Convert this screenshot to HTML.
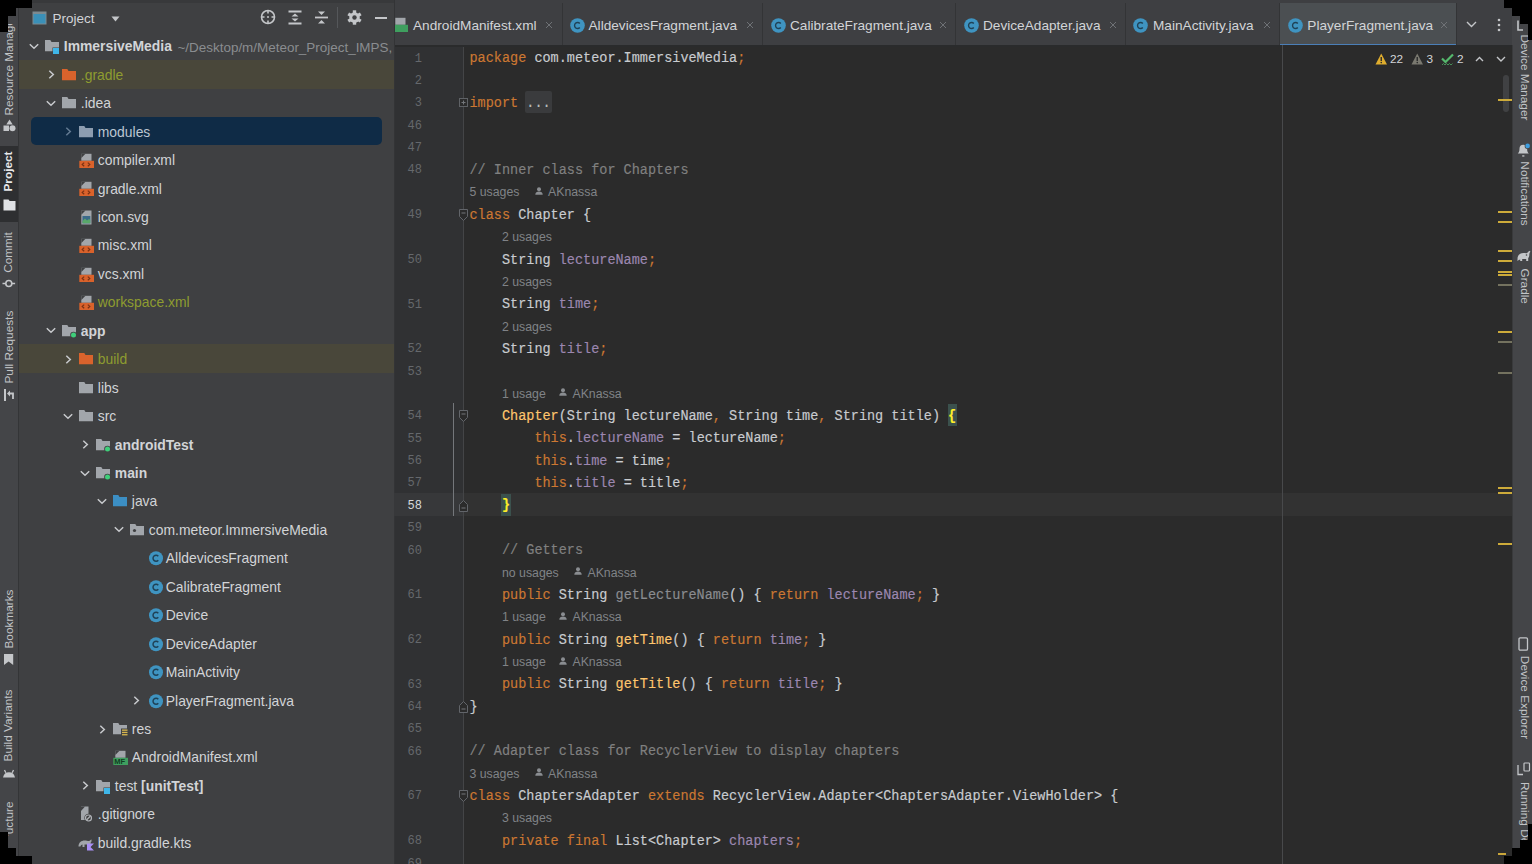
<!DOCTYPE html><html><head><meta charset="utf-8"><style>
*{box-sizing:border-box;margin:0;padding:0}
html,body{width:1532px;height:864px;overflow:hidden;background:#000}
body{position:relative;font-family:"Liberation Sans",sans-serif}
.a{position:absolute}
.t{position:absolute;white-space:pre;line-height:1}
.tr{position:absolute;white-space:pre;line-height:1;font-size:13.9px;color:#d2d4d7}
.cd{position:absolute;white-space:pre;line-height:1;font-family:"Liberation Mono",monospace;font-size:13.53px;color:#c9ccd0;transform:scaleY(1.12);transform-origin:0 11px;-webkit-text-stroke:0.15px currentColor}
svg{position:absolute;overflow:visible}
</style></head><body>

<div class="a" style="left:0;top:0;width:19px;height:864px;background:#444548"></div>
<div class="a" style="left:19px;top:0;width:375px;height:864px;background:#3f4042"></div>
<div class="a" style="left:394px;top:0;width:1118px;height:45px;background:#3e3f42"></div>
<div class="a" style="left:394px;top:45px;width:1118px;height:819px;background:#2b2b2b"></div>
<div class="a" style="left:1512px;top:0;width:20px;height:864px;background:#444548"></div>
<div class="a" style="left:19px;top:59.81999999999999px;width:375px;height:29px;background:#49473a"></div>
<div class="a" style="left:31px;top:116.66px;width:351px;height:28.5px;background:#0f2b46;border-radius:5px"></div>
<div class="a" style="left:19px;top:344.02px;width:375px;height:29px;background:#49473a"></div>
<svg style="left:29px;top:42.85px" width="10" height="7" viewBox="0 0 10 7"><path d="M0.8 1.2 L5 5.2 L9.2 1.2" fill="none" stroke="#c8cacd" stroke-width="1.5"/></svg>
<svg style="left:44px;top:38.35px" width="16" height="16" viewBox="0 0 16 16"><path d="M1 2h5.3l1.2 2H15v9.2H1z" fill="#a2a6ab"/><rect x="8.5" y="9.5" width="7" height="7" fill="#3f4042"/><rect x="9" y="10" width="6" height="6" fill="#3fb6e9"/></svg>
<div class="tr" style="left:63.8px;top:40.35px;font-weight:bold">ImmersiveMedia</div>
<div class="tr" style="left:177.5px;top:40.65px;font-size:13.45px;color:#8a8d90">~/Desktop/m/Meteor_Project_IMPS,</div>
<svg style="left:48px;top:70.295px" width="7" height="9" viewBox="0 0 7 9"><path d="M1.3 0.8 L5.3 4.5 L1.3 8.2" fill="none" stroke="#c8cacd" stroke-width="1.5"/></svg>
<svg style="left:61px;top:66.795px" width="16" height="16" viewBox="0 0 16 16"><path d="M1 2h5.3l1.2 2H15v9.2H1z" fill="#d9632c"/></svg>
<div class="tr" style="left:80.8px;top:68.795px;color:#8e9c30">.gradle</div>
<svg style="left:46px;top:99.74000000000001px" width="10" height="7" viewBox="0 0 10 7"><path d="M0.8 1.2 L5 5.2 L9.2 1.2" fill="none" stroke="#c8cacd" stroke-width="1.5"/></svg>
<svg style="left:61px;top:95.24000000000001px" width="16" height="16" viewBox="0 0 16 16"><path d="M1 2h5.3l1.2 2H15v9.2H1z" fill="#a2a6ab"/></svg>
<div class="tr" style="left:80.8px;top:97.24000000000001px">.idea</div>
<svg style="left:65px;top:127.18499999999997px" width="7" height="9" viewBox="0 0 7 9"><path d="M1.3 0.8 L5.3 4.5 L1.3 8.2" fill="none" stroke="#647b93" stroke-width="1.5"/></svg>
<svg style="left:78px;top:123.68499999999997px" width="16" height="16" viewBox="0 0 16 16"><path d="M1 2h5.3l1.2 2H15v9.2H1z" fill="#8d9db0"/></svg>
<div class="tr" style="left:97.8px;top:125.68499999999997px;color:#bcc6d1">modules</div>
<svg style="left:78px;top:152.82999999999998px" width="16" height="16" viewBox="0 0 16 16"><path d="M3.3 0.8h10.2v7h-10.2z" fill="#a2a6ab"/><path d="M3.3 0.8v4.2l4.2-4.2z" fill="#3f4042"/><rect x="1.3" y="7.8" width="14.7" height="7.2" fill="#d9622b"/><path d="M6.2 9.6l-2 1.8 2 1.8M9.8 9.6l2 1.8-2 1.8" fill="none" stroke="#7a3214" stroke-width="1.2"/></svg>
<div class="tr" style="left:97.8px;top:154.13px">compiler.xml</div>
<svg style="left:78px;top:181.275px" width="16" height="16" viewBox="0 0 16 16"><path d="M3.3 0.8h10.2v7h-10.2z" fill="#a2a6ab"/><path d="M3.3 0.8v4.2l4.2-4.2z" fill="#3f4042"/><rect x="1.3" y="7.8" width="14.7" height="7.2" fill="#d9622b"/><path d="M6.2 9.6l-2 1.8 2 1.8M9.8 9.6l2 1.8-2 1.8" fill="none" stroke="#7a3214" stroke-width="1.2"/></svg>
<div class="tr" style="left:97.8px;top:182.57500000000002px">gradle.xml</div>
<svg style="left:78px;top:210.02px" width="16" height="16" viewBox="0 0 16 16"><path d="M3.3 0.5h10.2v14H3.3z" fill="#a2a6ab"/><path d="M3.3 0.5v4.2l4.2-4.2z" fill="#3f4042"/><rect x="4.5" y="6" width="7.8" height="7.3" fill="#3b6b8a"/><path d="M4.5 11l2.5-2.5 2 2 2-1.5 1.3 1v3.3h-7.8z" fill="#59a869"/></svg>
<div class="tr" style="left:97.8px;top:211.02px">icon.svg</div>
<svg style="left:78px;top:238.165px" width="16" height="16" viewBox="0 0 16 16"><path d="M3.3 0.8h10.2v7h-10.2z" fill="#a2a6ab"/><path d="M3.3 0.8v4.2l4.2-4.2z" fill="#3f4042"/><rect x="1.3" y="7.8" width="14.7" height="7.2" fill="#d9622b"/><path d="M6.2 9.6l-2 1.8 2 1.8M9.8 9.6l2 1.8-2 1.8" fill="none" stroke="#7a3214" stroke-width="1.2"/></svg>
<div class="tr" style="left:97.8px;top:239.465px">misc.xml</div>
<svg style="left:78px;top:266.60999999999996px" width="16" height="16" viewBox="0 0 16 16"><path d="M3.3 0.8h10.2v7h-10.2z" fill="#a2a6ab"/><path d="M3.3 0.8v4.2l4.2-4.2z" fill="#3f4042"/><rect x="1.3" y="7.8" width="14.7" height="7.2" fill="#d9622b"/><path d="M6.2 9.6l-2 1.8 2 1.8M9.8 9.6l2 1.8-2 1.8" fill="none" stroke="#7a3214" stroke-width="1.2"/></svg>
<div class="tr" style="left:97.8px;top:267.90999999999997px">vcs.xml</div>
<svg style="left:78px;top:295.055px" width="16" height="16" viewBox="0 0 16 16"><path d="M3.3 0.8h10.2v7h-10.2z" fill="#a2a6ab"/><path d="M3.3 0.8v4.2l4.2-4.2z" fill="#3f4042"/><rect x="1.3" y="7.8" width="14.7" height="7.2" fill="#d9622b"/><path d="M6.2 9.6l-2 1.8 2 1.8M9.8 9.6l2 1.8-2 1.8" fill="none" stroke="#7a3214" stroke-width="1.2"/></svg>
<div class="tr" style="left:97.8px;top:296.355px;color:#8e9c30">workspace.xml</div>
<svg style="left:46px;top:327.3px" width="10" height="7" viewBox="0 0 10 7"><path d="M0.8 1.2 L5 5.2 L9.2 1.2" fill="none" stroke="#c8cacd" stroke-width="1.5"/></svg>
<svg style="left:61px;top:322.8px" width="16" height="16" viewBox="0 0 16 16"><path d="M1 2h5.3l1.2 2H15v9.2H1z" fill="#a2a6ab"/><circle cx="12.5" cy="12" r="3.3" fill="#3f4042"/><circle cx="12.5" cy="12" r="2.5" fill="#3fcf7a"/></svg>
<div class="tr" style="left:80.8px;top:324.8px;font-weight:bold">app</div>
<svg style="left:65px;top:354.74499999999995px" width="7" height="9" viewBox="0 0 7 9"><path d="M1.3 0.8 L5.3 4.5 L1.3 8.2" fill="none" stroke="#c8cacd" stroke-width="1.5"/></svg>
<svg style="left:78px;top:351.24499999999995px" width="16" height="16" viewBox="0 0 16 16"><path d="M1 2h5.3l1.2 2H15v9.2H1z" fill="#d9632c"/></svg>
<div class="tr" style="left:97.8px;top:353.24499999999995px;color:#8e9c30">build</div>
<svg style="left:78px;top:379.69px" width="16" height="16" viewBox="0 0 16 16"><path d="M1 2h5.3l1.2 2H15v9.2H1z" fill="#a2a6ab"/></svg>
<div class="tr" style="left:97.8px;top:381.69px">libs</div>
<svg style="left:63px;top:412.635px" width="10" height="7" viewBox="0 0 10 7"><path d="M0.8 1.2 L5 5.2 L9.2 1.2" fill="none" stroke="#c8cacd" stroke-width="1.5"/></svg>
<svg style="left:78px;top:408.135px" width="16" height="16" viewBox="0 0 16 16"><path d="M1 2h5.3l1.2 2H15v9.2H1z" fill="#a2a6ab"/></svg>
<div class="tr" style="left:97.8px;top:410.135px">src</div>
<svg style="left:82px;top:440.08px" width="7" height="9" viewBox="0 0 7 9"><path d="M1.3 0.8 L5.3 4.5 L1.3 8.2" fill="none" stroke="#c8cacd" stroke-width="1.5"/></svg>
<svg style="left:95px;top:436.58px" width="16" height="16" viewBox="0 0 16 16"><path d="M1 2h5.3l1.2 2H15v9.2H1z" fill="#a2a6ab"/><circle cx="12.5" cy="12" r="3.3" fill="#3f4042"/><circle cx="12.5" cy="12" r="2.5" fill="#3fcf7a"/></svg>
<div class="tr" style="left:114.8px;top:438.58px;font-weight:bold">androidTest</div>
<svg style="left:80px;top:469.525px" width="10" height="7" viewBox="0 0 10 7"><path d="M0.8 1.2 L5 5.2 L9.2 1.2" fill="none" stroke="#c8cacd" stroke-width="1.5"/></svg>
<svg style="left:95px;top:465.025px" width="16" height="16" viewBox="0 0 16 16"><path d="M1 2h5.3l1.2 2H15v9.2H1z" fill="#a2a6ab"/><circle cx="12.5" cy="12" r="3.3" fill="#3f4042"/><circle cx="12.5" cy="12" r="2.5" fill="#3fcf7a"/></svg>
<div class="tr" style="left:114.8px;top:467.025px;font-weight:bold">main</div>
<svg style="left:97px;top:497.96999999999997px" width="10" height="7" viewBox="0 0 10 7"><path d="M0.8 1.2 L5 5.2 L9.2 1.2" fill="none" stroke="#c8cacd" stroke-width="1.5"/></svg>
<svg style="left:112px;top:493.46999999999997px" width="16" height="16" viewBox="0 0 16 16"><path d="M1 2h5.3l1.2 2H15v9.2H1z" fill="#3c8fc4"/></svg>
<div class="tr" style="left:131.8px;top:495.46999999999997px">java</div>
<svg style="left:114px;top:526.4150000000001px" width="10" height="7" viewBox="0 0 10 7"><path d="M0.8 1.2 L5 5.2 L9.2 1.2" fill="none" stroke="#c8cacd" stroke-width="1.5"/></svg>
<svg style="left:129px;top:521.9150000000001px" width="16" height="16" viewBox="0 0 16 16"><path d="M1 2h5.3l1.2 2H15v9.2H1z" fill="#a2a6ab"/><circle cx="5.5" cy="8.5" r="1.6" fill="#3f4042"/></svg>
<div class="tr" style="left:148.8px;top:523.9150000000001px">com.meteor.ImmersiveMedia</div>
<svg style="left:147.5px;top:550.3600000000001px" width="16" height="16" viewBox="0 0 16 16"><circle cx="8" cy="8.2" r="7" fill="#3f94c1"/><path d="M10.3 6.2A3 3 0 1 0 10.3 10.2" fill="none" stroke="#1f4257" stroke-width="1.5"/></svg>
<div class="tr" style="left:165.8px;top:552.3600000000001px">AlldevicesFragment</div>
<svg style="left:147.5px;top:578.8050000000001px" width="16" height="16" viewBox="0 0 16 16"><circle cx="8" cy="8.2" r="7" fill="#3f94c1"/><path d="M10.3 6.2A3 3 0 1 0 10.3 10.2" fill="none" stroke="#1f4257" stroke-width="1.5"/></svg>
<div class="tr" style="left:165.8px;top:580.8050000000001px">CalibrateFragment</div>
<svg style="left:147.5px;top:607.2500000000001px" width="16" height="16" viewBox="0 0 16 16"><circle cx="8" cy="8.2" r="7" fill="#3f94c1"/><path d="M10.3 6.2A3 3 0 1 0 10.3 10.2" fill="none" stroke="#1f4257" stroke-width="1.5"/></svg>
<div class="tr" style="left:165.8px;top:609.2500000000001px">Device</div>
<svg style="left:147.5px;top:635.695px" width="16" height="16" viewBox="0 0 16 16"><circle cx="8" cy="8.2" r="7" fill="#3f94c1"/><path d="M10.3 6.2A3 3 0 1 0 10.3 10.2" fill="none" stroke="#1f4257" stroke-width="1.5"/></svg>
<div class="tr" style="left:165.8px;top:637.695px">DeviceAdapter</div>
<svg style="left:147.5px;top:664.14px" width="16" height="16" viewBox="0 0 16 16"><circle cx="8" cy="8.2" r="7" fill="#3f94c1"/><path d="M10.3 6.2A3 3 0 1 0 10.3 10.2" fill="none" stroke="#1f4257" stroke-width="1.5"/></svg>
<div class="tr" style="left:165.8px;top:666.14px">MainActivity</div>
<svg style="left:133px;top:696.0850000000002px" width="7" height="9" viewBox="0 0 7 9"><path d="M1.3 0.8 L5.3 4.5 L1.3 8.2" fill="none" stroke="#c8cacd" stroke-width="1.5"/></svg>
<svg style="left:147.5px;top:692.5850000000002px" width="16" height="16" viewBox="0 0 16 16"><circle cx="8" cy="8.2" r="7" fill="#3f94c1"/><path d="M10.3 6.2A3 3 0 1 0 10.3 10.2" fill="none" stroke="#1f4257" stroke-width="1.5"/></svg>
<div class="tr" style="left:165.8px;top:694.5850000000002px">PlayerFragment.java</div>
<svg style="left:99px;top:724.5300000000001px" width="7" height="9" viewBox="0 0 7 9"><path d="M1.3 0.8 L5.3 4.5 L1.3 8.2" fill="none" stroke="#c8cacd" stroke-width="1.5"/></svg>
<svg style="left:112px;top:721.0300000000001px" width="16" height="16" viewBox="0 0 16 16"><path d="M1 2h5.3l1.2 2H15v9.2H1z" fill="#a2a6ab"/><rect x="9" y="7.5" width="7" height="8.5" fill="#3f4042"/><rect x="10" y="8.5" width="5.5" height="1.3" fill="#d8b74e"/><rect x="10" y="10.8" width="5.5" height="1.3" fill="#d8b74e"/><rect x="10" y="13.1" width="5.5" height="1.3" fill="#d8b74e"/></svg>
<div class="tr" style="left:131.8px;top:723.0300000000001px">res</div>
<svg style="left:112px;top:750.1750000000001px" width="16" height="16" viewBox="0 0 16 16"><path d="M3.3 0.8h10.2v7h-10.2z" fill="#a2a6ab"/><path d="M3.3 0.8v4.2l4.2-4.2z" fill="#3f4042"/><rect x="1.3" y="7.8" width="14.7" height="7.2" fill="#3f9f5f"/><text x="2.2" y="14" font-family="Liberation Sans" font-size="7.5" font-weight="bold" fill="#123d22">MF</text></svg>
<div class="tr" style="left:131.8px;top:751.475px">AndroidManifest.xml</div>
<svg style="left:82px;top:781.4200000000001px" width="7" height="9" viewBox="0 0 7 9"><path d="M1.3 0.8 L5.3 4.5 L1.3 8.2" fill="none" stroke="#c8cacd" stroke-width="1.5"/></svg>
<svg style="left:95px;top:777.9200000000001px" width="16" height="16" viewBox="0 0 16 16"><path d="M1 2h5.3l1.2 2H15v9.2H1z" fill="#a2a6ab"/><rect x="8.5" y="9.5" width="7" height="7" fill="#3f4042"/><rect x="9" y="10" width="6" height="6" fill="#3fb6e9"/></svg>
<div class="tr" style="left:114.8px;top:779.9200000000001px">test <b>[unitTest]</b></div>
<svg style="left:78px;top:806.365px" width="16" height="16" viewBox="0 0 16 16"><path d="M3 0.5h7.5v13.5H3z" fill="#a2a6ab"/><path d="M3 0.5v4.5l4-4.5z" fill="#3f4042"/><circle cx="10.5" cy="12" r="4.2" fill="#3f4042"/><circle cx="10.5" cy="12" r="3" fill="none" stroke="#b0b3b8" stroke-width="1.2"/><path d="M8.5 14l4-4" stroke="#b0b3b8" stroke-width="1.2"/></svg>
<div class="tr" style="left:97.8px;top:808.365px">.gitignore</div>
<svg style="left:78px;top:834.8100000000001px" width="16" height="16" viewBox="0 0 16 16"><path d="M0.5 11.5c0-4 3-6 6-6 2 0 3 .5 4.5 .5 1 0 1.5-1.5 2.5-1.5v2c-1 .5-1 2-1 5.5h-2v-2.5h-4v2.5h-2v-2.5c-1 0-2 1-2 2z" fill="#a2a6ab"/><path d="M9 8.5h7l-3.5 3.5 3.5 3.5h-7z" fill="#a98ff5"/></svg>
<div class="tr" style="left:97.8px;top:836.8100000000001px">build.gradle.kts</div>
<div class="a" style="left:19px;top:0;width:375px;height:3px;background:#38393b"></div>
<svg style="left:32px;top:11px" width="15" height="14" viewBox="0 0 15 14"><rect x="0.5" y="0.5" width="14" height="13" fill="#7d8a90"/><rect x="1.5" y="3" width="12" height="9.5" fill="#3a90b8"/></svg>
<div class="t" style="left:52.5px;top:12px;font-size:13.5px;color:#d2d4d7">Project</div>
<svg style="left:111px;top:16px" width="9" height="6" viewBox="0 0 9 6"><path d="M0.5 0.5h8L4.5 5.5z" fill="#c4c6c9"/></svg>
<svg style="left:260px;top:9px" width="16" height="16" viewBox="0 0 16 16"><circle cx="8" cy="8" r="6.5" fill="none" stroke="#c4c6c9" stroke-width="1.6"/><path d="M8 1.5v3M8 11.5v3M1.5 8h3M11.5 8h3" stroke="#c4c6c9" stroke-width="1.6"/><circle cx="8" cy="8" r="1" fill="#c4c6c9"/></svg>
<svg style="left:288px;top:9px" width="14" height="16" viewBox="0 0 14 16"><path d="M0.5 2.5h13M0.5 14.5h13" stroke="#c4c6c9" stroke-width="1.8"/><path d="M3.5 7.6l3.5-3 3.5 3zM3.5 9.4l3.5 3 3.5-3z" fill="#c4c6c9"/></svg>
<svg style="left:315px;top:9px" width="13" height="16" viewBox="0 0 13 16"><path d="M0 8.5h13" stroke="#c4c6c9" stroke-width="1.8"/><path d="M3 2.5h7L6.5 6zM3 14.5h7L6.5 11z" fill="#c4c6c9"/></svg>
<div class="a" style="left:337px;top:7px;width:1px;height:21px;background:#55575a"></div>
<svg style="left:347px;top:10px" width="15" height="15" viewBox="0 0 15 15"><g transform="translate(7.5 7.5)" fill="#c4c6c9"><circle r="5.2"/><rect x="-1.7" y="-7.2" width="3.4" height="14.4"/><rect x="-1.7" y="-7.2" width="3.4" height="14.4" transform="rotate(60)"/><rect x="-1.7" y="-7.2" width="3.4" height="14.4" transform="rotate(120)"/></g><circle cx="7.5" cy="7.5" r="2.2" fill="#3f4042"/></svg>
<div class="a" style="left:375px;top:16.5px;width:12px;height:2px;background:#c4c6c9"></div>
<div class="a" style="left:0;top:146px;width:18px;height:76px;background:#2e2f31"></div>
<div class="a" style="left:18px;top:0;width:1px;height:864px;background:#343537"></div>
<div class="a" style="left:0;top:24px;width:18px;height:98px;overflow:hidden">
<div class="t" style="left:-40.5px;top:34.5px;width:100px;height:13px;font-size:11.8px;color:#c2c4c7;transform:rotate(-90deg);text-align:left">Resource Manager</div>
</div>
<div class="t" style="left:-12.0px;top:165.0px;width:43px;height:13px;font-size:11.8px;color:#e6e7e9;font-weight:bold;transform:rotate(-90deg);text-align:center">Project</div>
<div class="t" style="left:-11.0px;top:246.0px;width:41px;height:13px;font-size:11.8px;color:#c2c4c7;font-weight:normal;transform:rotate(-90deg);text-align:center">Commit</div>
<div class="t" style="left:-26.5px;top:340.5px;width:72px;height:13px;font-size:11.8px;color:#c2c4c7;font-weight:normal;transform:rotate(-90deg);text-align:center">Pull Requests</div>
<div class="t" style="left:-19.5px;top:612.5px;width:58px;height:13px;font-size:11.8px;color:#c2c4c7;font-weight:normal;transform:rotate(-90deg);text-align:center">Bookmarks</div>
<div class="t" style="left:-27.0px;top:719.0px;width:73px;height:13px;font-size:11.8px;color:#c2c4c7;font-weight:normal;transform:rotate(-90deg);text-align:center">Build Variants</div>
<div class="a" style="left:0;top:780px;width:18px;height:56px;overflow:hidden">
<div class="t" style="left:-26.5px;top:50.5px;width:72px;height:13px;font-size:11.8px;color:#c2c4c7;transform:rotate(-90deg);text-align:right">Structure</div>
</div>
<div class="a" style="left:1280px;top:3px;width:176px;height:42px;background:#4b4f52"></div>
<div class="a" style="left:1280px;top:43.5px;width:176px;height:1.5px;background:#4b7fb8"></div>
<div class="a" style="left:562px;top:3px;width:1px;height:42px;background:#333436"></div>
<div class="a" style="left:762px;top:3px;width:1px;height:42px;background:#333436"></div>
<div class="a" style="left:955px;top:3px;width:1px;height:42px;background:#333436"></div>
<div class="a" style="left:1125px;top:3px;width:1px;height:42px;background:#333436"></div>
<div class="a" style="left:1279px;top:3px;width:1px;height:42px;background:#333436"></div>
<div class="a" style="left:1456px;top:3px;width:1px;height:42px;background:#333436"></div>
<div class="a" style="left:394px;top:44.5px;width:886px;height:1px;background:#333436"></div>
<div class="a" style="left:1456px;top:44.5px;width:56px;height:1px;background:#333436"></div>
<div class="a" style="left:394px;top:0;width:16px;height:45px;overflow:hidden"><svg style="left:-2px;top:17px" width="16" height="16" viewBox="0 0 16 16"><path d="M3.3 0.8h10.2v7h-10.2z" fill="#a2a6ab"/><rect x="1.3" y="7.8" width="14.7" height="7.2" fill="#3f9f5f"/></svg></div>
<div class="t" style="left:413px;top:19px;font-size:13.65px;color:#d2d4d7">AndroidManifest.xml</div>
<svg style="left:545px;top:21px" width="8" height="8" viewBox="0 0 8 8"><path d="M1 1l6 6M7 1l-6 6" stroke="#6f7276" stroke-width="1"/></svg>
<svg style="left:569.5px;top:17.5px" width="15" height="15" viewBox="0 0 15 15"><circle cx="7.5" cy="7.5" r="7.3" fill="#3f94c1"/><path d="M9.8 5.5A3 3 0 1 0 9.8 9.5" fill="none" stroke="#1f4257" stroke-width="1.4"/></svg>
<div class="t" style="left:588.5px;top:19px;font-size:13.65px;color:#d2d4d7">AlldevicesFragment.java</div>
<svg style="left:746px;top:21px" width="8" height="8" viewBox="0 0 8 8"><path d="M1 1l6 6M7 1l-6 6" stroke="#6f7276" stroke-width="1"/></svg>
<svg style="left:770.5px;top:17.5px" width="15" height="15" viewBox="0 0 15 15"><circle cx="7.5" cy="7.5" r="7.3" fill="#3f94c1"/><path d="M9.8 5.5A3 3 0 1 0 9.8 9.5" fill="none" stroke="#1f4257" stroke-width="1.4"/></svg>
<div class="t" style="left:790px;top:19px;font-size:13.65px;color:#d2d4d7">CalibrateFragment.java</div>
<svg style="left:939px;top:21px" width="8" height="8" viewBox="0 0 8 8"><path d="M1 1l6 6M7 1l-6 6" stroke="#6f7276" stroke-width="1"/></svg>
<svg style="left:963.5px;top:17.5px" width="15" height="15" viewBox="0 0 15 15"><circle cx="7.5" cy="7.5" r="7.3" fill="#3f94c1"/><path d="M9.8 5.5A3 3 0 1 0 9.8 9.5" fill="none" stroke="#1f4257" stroke-width="1.4"/></svg>
<div class="t" style="left:983px;top:19px;font-size:13.65px;color:#d2d4d7">DeviceAdapter.java</div>
<svg style="left:1109px;top:21px" width="8" height="8" viewBox="0 0 8 8"><path d="M1 1l6 6M7 1l-6 6" stroke="#6f7276" stroke-width="1"/></svg>
<svg style="left:1133.0px;top:17.5px" width="15" height="15" viewBox="0 0 15 15"><circle cx="7.5" cy="7.5" r="7.3" fill="#3f94c1"/><path d="M9.8 5.5A3 3 0 1 0 9.8 9.5" fill="none" stroke="#1f4257" stroke-width="1.4"/></svg>
<div class="t" style="left:1153px;top:19px;font-size:13.65px;color:#d2d4d7">MainActivity.java</div>
<svg style="left:1263px;top:21px" width="8" height="8" viewBox="0 0 8 8"><path d="M1 1l6 6M7 1l-6 6" stroke="#6f7276" stroke-width="1"/></svg>
<svg style="left:1288.0px;top:17.5px" width="15" height="15" viewBox="0 0 15 15"><circle cx="7.5" cy="7.5" r="7.3" fill="#3f94c1"/><path d="M9.8 5.5A3 3 0 1 0 9.8 9.5" fill="none" stroke="#1f4257" stroke-width="1.4"/></svg>
<div class="t" style="left:1307.3px;top:19px;font-size:13.65px;color:#d2d4d7">PlayerFragment.java</div>
<svg style="left:1440px;top:21px" width="8" height="8" viewBox="0 0 8 8"><path d="M1 1l6 6M7 1l-6 6" stroke="#6f7276" stroke-width="1"/></svg>
<svg style="left:1466px;top:21px" width="11" height="7" viewBox="0 0 11 7"><path d="M1 1l4.5 4.5L10 1" fill="none" stroke="#c4c6c9" stroke-width="1.4"/></svg>
<svg style="left:1497px;top:18px" width="4" height="14" viewBox="0 0 4 14"><circle cx="2" cy="2" r="1.3" fill="#c4c6c9"/><circle cx="2" cy="7" r="1.3" fill="#c4c6c9"/><circle cx="2" cy="12" r="1.3" fill="#c4c6c9"/></svg>
<div class="a" style="left:394px;top:45px;width:69px;height:819px;background:#303133"></div>
<div class="a" style="left:463px;top:45px;width:1px;height:819px;background:#444547"></div>
<div class="a" style="left:394px;top:45px;width:1118px;height:2px;background:#2a2b2c"></div>
<div class="a" style="left:394px;top:0;width:1px;height:864px;background:#333436"></div>
<div class="a" style="left:464px;top:493.14px;width:1048px;height:23px;background:#323232"></div>
<div class="a" style="left:394px;top:493.14px;width:69px;height:23px;background:#37383a"></div>
<div class="a" style="left:1282px;top:45px;width:1px;height:819px;background:#48494b"></div>
<div class="cd" style="left:469.5px;top:52.3px"><span style="color:#cc7832">package</span><span style="color:#c9ccd0"> com.meteor.ImmersiveMedia</span><span style="color:#cc7832">;</span></div>
<div class="a" style="left:524.833px;top:91.214px;width:27.357px;height:22px;background:#3a3b3d;border-radius:2px"></div>
<div class="cd" style="left:469.5px;top:97.014px"><span style="color:#cc7832">import</span><span style="color:#c9ccd0"> </span><span style="color:#b9bbbe">...</span></div>
<div class="cd" style="left:469.5px;top:164.085px"><span style="color:#808080">// Inner class for Chapters</span></div>
<div class="cd" style="left:469.5px;top:208.799px"><span style="color:#cc7832">class</span><span style="color:#c9ccd0"> Chapter {</span></div>
<div class="cd" style="left:469.5px;top:253.51299999999998px"><span style="color:#c9ccd0">    String </span><span style="color:#9c87b0">lectureName</span><span style="color:#cc7832">;</span></div>
<div class="cd" style="left:469.5px;top:298.22700000000003px"><span style="color:#c9ccd0">    String </span><span style="color:#9c87b0">time</span><span style="color:#cc7832">;</span></div>
<div class="cd" style="left:469.5px;top:342.941px"><span style="color:#c9ccd0">    String </span><span style="color:#9c87b0">title</span><span style="color:#cc7832">;</span></div>
<div class="a" style="left:948.021px;top:404.212px;width:9.119px;height:22px;background:#3b514d"></div>
<div class="cd" style="left:469.5px;top:410.012px"><span style="color:#c9ccd0">    </span><span style="color:#ffc66d">Chapter</span><span style="color:#c9ccd0">(String lectureName</span><span style="color:#cc7832">,</span><span style="color:#c9ccd0"> String time</span><span style="color:#cc7832">,</span><span style="color:#c9ccd0"> String title) </span><span style="color:#ffef28;font-weight:bold">{</span></div>
<div class="cd" style="left:469.5px;top:432.36899999999997px"><span style="color:#c9ccd0">        </span><span style="color:#cc7832">this</span><span style="color:#c9ccd0">.</span><span style="color:#9c87b0">lectureName</span><span style="color:#c9ccd0"> = lectureName</span><span style="color:#cc7832">;</span></div>
<div class="cd" style="left:469.5px;top:454.726px"><span style="color:#c9ccd0">        </span><span style="color:#cc7832">this</span><span style="color:#c9ccd0">.</span><span style="color:#9c87b0">time</span><span style="color:#c9ccd0"> = time</span><span style="color:#cc7832">;</span></div>
<div class="cd" style="left:469.5px;top:477.083px"><span style="color:#c9ccd0">        </span><span style="color:#cc7832">this</span><span style="color:#c9ccd0">.</span><span style="color:#9c87b0">title</span><span style="color:#c9ccd0"> = title</span><span style="color:#cc7832">;</span></div>
<div class="a" style="left:501.476px;top:493.64px;width:9.119px;height:22px;background:#3b514d"></div>
<div class="cd" style="left:469.5px;top:499.44px"><span style="color:#c9ccd0">    </span><span style="color:#ffef28;font-weight:bold">}</span></div>
<div class="cd" style="left:469.5px;top:544.154px"><span style="color:#c9ccd0">    </span><span style="color:#808080">// Getters</span></div>
<div class="cd" style="left:469.5px;top:588.8679999999999px"><span style="color:#c9ccd0">    </span><span style="color:#cc7832">public</span><span style="color:#c9ccd0"> String </span><span style="color:#8a8c90">getLectureName</span><span style="color:#c9ccd0">() { </span><span style="color:#cc7832">return</span><span style="color:#c9ccd0"> </span><span style="color:#9c87b0">lectureName</span><span style="color:#cc7832">;</span><span style="color:#c9ccd0"> }</span></div>
<div class="cd" style="left:469.5px;top:633.5819999999999px"><span style="color:#c9ccd0">    </span><span style="color:#cc7832">public</span><span style="color:#c9ccd0"> String </span><span style="color:#ffc66d">getTime</span><span style="color:#c9ccd0">() { </span><span style="color:#cc7832">return</span><span style="color:#c9ccd0"> </span><span style="color:#9c87b0">time</span><span style="color:#cc7832">;</span><span style="color:#c9ccd0"> }</span></div>
<div class="cd" style="left:469.5px;top:678.2959999999999px"><span style="color:#c9ccd0">    </span><span style="color:#cc7832">public</span><span style="color:#c9ccd0"> String </span><span style="color:#ffc66d">getTitle</span><span style="color:#c9ccd0">() { </span><span style="color:#cc7832">return</span><span style="color:#c9ccd0"> </span><span style="color:#9c87b0">title</span><span style="color:#cc7832">;</span><span style="color:#c9ccd0"> }</span></div>
<div class="cd" style="left:469.5px;top:700.6529999999999px"><span style="color:#c9ccd0">}</span></div>
<div class="cd" style="left:469.5px;top:745.367px"><span style="color:#808080">// Adapter class for RecyclerView to display chapters</span></div>
<div class="cd" style="left:469.5px;top:790.0809999999999px"><span style="color:#cc7832">class</span><span style="color:#c9ccd0"> ChaptersAdapter </span><span style="color:#cc7832">extends</span><span style="color:#c9ccd0"> RecyclerView.Adapter&lt;ChaptersAdapter.ViewHolder&gt; {</span></div>
<div class="cd" style="left:469.5px;top:834.795px"><span style="color:#c9ccd0">    </span><span style="color:#cc7832">private</span><span style="color:#c9ccd0"> </span><span style="color:#cc7832">final</span><span style="color:#c9ccd0"> List&lt;Chapter&gt; </span><span style="color:#9c87b0">chapters</span><span style="color:#cc7832">;</span></div>
<div class="t" style="left:380px;width:42px;text-align:right;top:52.7px;font-family:'Liberation Mono',monospace;font-size:12px;color:#65686c">1</div>
<div class="t" style="left:380px;width:42px;text-align:right;top:75.057px;font-family:'Liberation Mono',monospace;font-size:12px;color:#65686c">2</div>
<div class="t" style="left:380px;width:42px;text-align:right;top:97.414px;font-family:'Liberation Mono',monospace;font-size:12px;color:#65686c">3</div>
<div class="t" style="left:380px;width:42px;text-align:right;top:119.771px;font-family:'Liberation Mono',monospace;font-size:12px;color:#65686c">46</div>
<div class="t" style="left:380px;width:42px;text-align:right;top:142.128px;font-family:'Liberation Mono',monospace;font-size:12px;color:#65686c">47</div>
<div class="t" style="left:380px;width:42px;text-align:right;top:164.48499999999999px;font-family:'Liberation Mono',monospace;font-size:12px;color:#65686c">48</div>
<div class="t" style="left:380px;width:42px;text-align:right;top:209.19899999999998px;font-family:'Liberation Mono',monospace;font-size:12px;color:#65686c">49</div>
<div class="t" style="left:380px;width:42px;text-align:right;top:253.91299999999995px;font-family:'Liberation Mono',monospace;font-size:12px;color:#65686c">50</div>
<div class="t" style="left:380px;width:42px;text-align:right;top:298.627px;font-family:'Liberation Mono',monospace;font-size:12px;color:#65686c">51</div>
<div class="t" style="left:380px;width:42px;text-align:right;top:343.34099999999995px;font-family:'Liberation Mono',monospace;font-size:12px;color:#65686c">52</div>
<div class="t" style="left:380px;width:42px;text-align:right;top:365.698px;font-family:'Liberation Mono',monospace;font-size:12px;color:#65686c">53</div>
<div class="t" style="left:380px;width:42px;text-align:right;top:410.412px;font-family:'Liberation Mono',monospace;font-size:12px;color:#65686c">54</div>
<div class="t" style="left:380px;width:42px;text-align:right;top:432.76899999999995px;font-family:'Liberation Mono',monospace;font-size:12px;color:#65686c">55</div>
<div class="t" style="left:380px;width:42px;text-align:right;top:455.126px;font-family:'Liberation Mono',monospace;font-size:12px;color:#65686c">56</div>
<div class="t" style="left:380px;width:42px;text-align:right;top:477.483px;font-family:'Liberation Mono',monospace;font-size:12px;color:#65686c">57</div>
<div class="t" style="left:380px;width:42px;text-align:right;top:499.84px;font-family:'Liberation Mono',monospace;font-size:12px;color:#d6d8db">58</div>
<div class="t" style="left:380px;width:42px;text-align:right;top:522.197px;font-family:'Liberation Mono',monospace;font-size:12px;color:#65686c">59</div>
<div class="t" style="left:380px;width:42px;text-align:right;top:544.5540000000001px;font-family:'Liberation Mono',monospace;font-size:12px;color:#65686c">60</div>
<div class="t" style="left:380px;width:42px;text-align:right;top:589.268px;font-family:'Liberation Mono',monospace;font-size:12px;color:#65686c">61</div>
<div class="t" style="left:380px;width:42px;text-align:right;top:633.982px;font-family:'Liberation Mono',monospace;font-size:12px;color:#65686c">62</div>
<div class="t" style="left:380px;width:42px;text-align:right;top:678.696px;font-family:'Liberation Mono',monospace;font-size:12px;color:#65686c">63</div>
<div class="t" style="left:380px;width:42px;text-align:right;top:701.053px;font-family:'Liberation Mono',monospace;font-size:12px;color:#65686c">64</div>
<div class="t" style="left:380px;width:42px;text-align:right;top:723.4100000000001px;font-family:'Liberation Mono',monospace;font-size:12px;color:#65686c">65</div>
<div class="t" style="left:380px;width:42px;text-align:right;top:745.767px;font-family:'Liberation Mono',monospace;font-size:12px;color:#65686c">66</div>
<div class="t" style="left:380px;width:42px;text-align:right;top:790.481px;font-family:'Liberation Mono',monospace;font-size:12px;color:#65686c">67</div>
<div class="t" style="left:380px;width:42px;text-align:right;top:835.195px;font-family:'Liberation Mono',monospace;font-size:12px;color:#65686c">68</div>
<div class="t" style="left:380px;width:42px;text-align:right;top:857.552px;font-family:'Liberation Mono',monospace;font-size:12px;color:#65686c">69</div>
<div class="t" style="left:469.5px;top:186.442px;font-size:12.3px;color:#808387">5 usages</div>
<svg style="left:535.0px;top:187.142px" width="8" height="8" viewBox="0 0 8 8"><circle cx="4" cy="2.3" r="2" fill="#8a8d91"/><path d="M0.3 7.8c0-2.5 1.6-3.3 3.7-3.3s3.7.8 3.7 3.3z" fill="#8a8d91"/></svg>
<div class="t" style="left:548.0px;top:186.442px;font-size:12.3px;color:#808387">AKnassa</div>
<div class="t" style="left:501.976px;top:231.156px;font-size:12.3px;color:#808387">2 usages</div>
<div class="t" style="left:501.976px;top:275.87px;font-size:12.3px;color:#808387">2 usages</div>
<div class="t" style="left:501.976px;top:320.584px;font-size:12.3px;color:#808387">2 usages</div>
<div class="t" style="left:501.976px;top:387.65500000000003px;font-size:12.3px;color:#808387">1 usage</div>
<svg style="left:559.476px;top:388.355px" width="8" height="8" viewBox="0 0 8 8"><circle cx="4" cy="2.3" r="2" fill="#8a8d91"/><path d="M0.3 7.8c0-2.5 1.6-3.3 3.7-3.3s3.7.8 3.7 3.3z" fill="#8a8d91"/></svg>
<div class="t" style="left:572.476px;top:387.65500000000003px;font-size:12.3px;color:#808387">AKnassa</div>
<div class="t" style="left:501.976px;top:566.511px;font-size:12.3px;color:#808387">no usages</div>
<svg style="left:574.476px;top:567.211px" width="8" height="8" viewBox="0 0 8 8"><circle cx="4" cy="2.3" r="2" fill="#8a8d91"/><path d="M0.3 7.8c0-2.5 1.6-3.3 3.7-3.3s3.7.8 3.7 3.3z" fill="#8a8d91"/></svg>
<div class="t" style="left:587.476px;top:566.511px;font-size:12.3px;color:#808387">AKnassa</div>
<div class="t" style="left:501.976px;top:611.2249999999999px;font-size:12.3px;color:#808387">1 usage</div>
<svg style="left:559.476px;top:611.925px" width="8" height="8" viewBox="0 0 8 8"><circle cx="4" cy="2.3" r="2" fill="#8a8d91"/><path d="M0.3 7.8c0-2.5 1.6-3.3 3.7-3.3s3.7.8 3.7 3.3z" fill="#8a8d91"/></svg>
<div class="t" style="left:572.476px;top:611.2249999999999px;font-size:12.3px;color:#808387">AKnassa</div>
<div class="t" style="left:501.976px;top:655.939px;font-size:12.3px;color:#808387">1 usage</div>
<svg style="left:559.476px;top:656.639px" width="8" height="8" viewBox="0 0 8 8"><circle cx="4" cy="2.3" r="2" fill="#8a8d91"/><path d="M0.3 7.8c0-2.5 1.6-3.3 3.7-3.3s3.7.8 3.7 3.3z" fill="#8a8d91"/></svg>
<div class="t" style="left:572.476px;top:655.939px;font-size:12.3px;color:#808387">AKnassa</div>
<div class="t" style="left:469.5px;top:767.7239999999999px;font-size:12.3px;color:#808387">3 usages</div>
<svg style="left:535.0px;top:768.424px" width="8" height="8" viewBox="0 0 8 8"><circle cx="4" cy="2.3" r="2" fill="#8a8d91"/><path d="M0.3 7.8c0-2.5 1.6-3.3 3.7-3.3s3.7.8 3.7 3.3z" fill="#8a8d91"/></svg>
<div class="t" style="left:548.0px;top:767.7239999999999px;font-size:12.3px;color:#808387">AKnassa</div>
<div class="t" style="left:501.976px;top:812.4379999999999px;font-size:12.3px;color:#808387">3 usages</div>
<svg style="left:459px;top:97.714px" width="9" height="9" viewBox="0 0 9 9"><rect x="0.5" y="0.5" width="8" height="8" fill="#2b2b2b" stroke="#5f6266"/><path d="M2.5 4.5h4M4.5 2.5v4" stroke="#74777b"/></svg>
<svg style="left:459px;top:209.19899999999998px" width="9" height="12" viewBox="0 0 9 12"><path d="M0.5 0.5h8v7l-4 4-4-4z" fill="#2b2b2b" stroke="#62656a" stroke-width="1"/><path d="M2.5 4h4" stroke="#74777b" stroke-width="1"/></svg>
<svg style="left:459px;top:410.412px" width="9" height="12" viewBox="0 0 9 12"><path d="M0.5 0.5h8v7l-4 4-4-4z" fill="#2b2b2b" stroke="#62656a" stroke-width="1"/><path d="M2.5 4h4" stroke="#74777b" stroke-width="1"/></svg>
<svg style="left:459px;top:499.84px" width="9" height="12" viewBox="0 0 9 12"><path d="M0.5 11.5h8v-7l-4-4-4 4z" fill="#2b2b2b" stroke="#62656a" stroke-width="1"/><path d="M2.5 8h4" stroke="#74777b" stroke-width="1"/></svg>
<svg style="left:459px;top:701.053px" width="9" height="12" viewBox="0 0 9 12"><path d="M0.5 11.5h8v-7l-4-4-4 4z" fill="#2b2b2b" stroke="#62656a" stroke-width="1"/><path d="M2.5 8h4" stroke="#74777b" stroke-width="1"/></svg>
<svg style="left:459px;top:790.481px" width="9" height="12" viewBox="0 0 9 12"><path d="M0.5 0.5h8v7l-4 4-4-4z" fill="#2b2b2b" stroke="#62656a" stroke-width="1"/><path d="M2.5 4h4" stroke="#74777b" stroke-width="1"/></svg>
<div class="a" style="left:453px;top:403.212px;width:1px;height:112.428px;background:#74777b"></div>
<svg style="left:1374.5px;top:52.5px" width="12.5" height="12" viewBox="0 0 12.5 12"><path d="M6.25 0.5L12 11.5H0.5z" fill="#dfad2e"/><path d="M6.25 4v4" stroke="#2b2b2b" stroke-width="1.4"/><circle cx="6.25" cy="9.6" r=".8" fill="#2b2b2b"/></svg>
<div class="t" style="left:1390px;top:53.5px;font-size:11.8px;color:#d2d4d7">22</div>
<svg style="left:1411px;top:52.5px" width="12.5" height="12" viewBox="0 0 12.5 12"><path d="M6.25 0.5L12 11.5H0.5z" fill="#7a7970"/><path d="M6.25 4v4" stroke="#2b2b2b" stroke-width="1.4"/><circle cx="6.25" cy="9.6" r=".8" fill="#2b2b2b"/></svg>
<div class="t" style="left:1426.5px;top:53.5px;font-size:11.8px;color:#d2d4d7">3</div>
<svg style="left:1441px;top:53px" width="13" height="13" viewBox="0 0 13 13"><path d="M1 5.5l3.5 3.5 7.5-7.5" fill="none" stroke="#55b86c" stroke-width="2.2"/><path d="M1 12l1.5-1.5 1.5 1.5 1.5-1.5 1.5 1.5 1.5-1.5 1.5 1.5 1.5-1.5" fill="none" stroke="#4a9a5e" stroke-width="0.9"/></svg>
<div class="t" style="left:1457px;top:53.5px;font-size:11.8px;color:#d2d4d7">2</div>
<svg style="left:1474.5px;top:56px" width="9" height="6" viewBox="0 0 9 6"><path d="M1 5l3.5-3.5L8 5" fill="none" stroke="#c4c6c9" stroke-width="1.4"/></svg>
<svg style="left:1495.5px;top:56px" width="10" height="6" viewBox="0 0 10 6"><path d="M1 1l4 4 4-4" fill="none" stroke="#c4c6c9" stroke-width="1.4"/></svg>
<div class="a" style="left:1502.5px;top:75px;width:6.5px;height:37px;background:#404143;border-radius:3px"></div>
<div class="a" style="left:1498px;top:99px;width:14.5px;height:2px;background:#cdab3a"></div>
<div class="a" style="left:1498px;top:211px;width:14.5px;height:2px;background:#cdab3a"></div>
<div class="a" style="left:1498px;top:221px;width:14.5px;height:2px;background:#cdab3a"></div>
<div class="a" style="left:1498px;top:250px;width:14.5px;height:2px;background:#cdab3a"></div>
<div class="a" style="left:1498px;top:260.4px;width:14.5px;height:2px;background:#cdab3a"></div>
<div class="a" style="left:1498px;top:270.5px;width:14.5px;height:2px;background:#cdab3a"></div>
<div class="a" style="left:1498px;top:273.7px;width:14.5px;height:2px;background:#cdab3a"></div>
<div class="a" style="left:1498px;top:283.5px;width:14.5px;height:2px;background:#74725f"></div>
<div class="a" style="left:1498px;top:330.5px;width:14.5px;height:2px;background:#cdab3a"></div>
<div class="a" style="left:1498px;top:341px;width:14.5px;height:2px;background:#74725f"></div>
<div class="a" style="left:1498px;top:372px;width:14.5px;height:2px;background:#74725f"></div>
<div class="a" style="left:1498px;top:486.5px;width:14.5px;height:2px;background:#cdab3a"></div>
<div class="a" style="left:1498px;top:492px;width:14.5px;height:2px;background:#cdab3a"></div>
<div class="a" style="left:1498px;top:543px;width:14.5px;height:2px;background:#cdab3a"></div>
<div class="a" style="left:1498px;top:852.5px;width:7.5px;height:2px;background:#c9a63a"></div>
<div class="a" style="left:1512px;top:45px;width:1px;height:819px;background:#393a3c"></div>
<div class="t" style="left:1480.5px;top:69.5px;width:84px;height:13px;font-size:11.8px;color:#c2c4c7;transform:rotate(90deg);text-align:center">Device Manager</div>
<div class="t" style="left:1489.5px;top:186.5px;width:66px;height:13px;font-size:11.8px;color:#c2c4c7;transform:rotate(90deg);text-align:center">Notifications</div>
<div class="t" style="left:1505.5px;top:278.5px;width:34px;height:13px;font-size:11.8px;color:#c2c4c7;transform:rotate(90deg);text-align:center">Gradle</div>
<div class="t" style="left:1480.5px;top:690.5px;width:84px;height:13px;font-size:11.8px;color:#c2c4c7;transform:rotate(90deg);text-align:center">Device Explorer</div>
<div class="t" style="left:1477.5px;top:819.5px;width:90px;height:13px;font-size:11.8px;color:#c2c4c7;transform:rotate(90deg);text-align:center">Running Devices</div>
<svg style="left:1517px;top:20px" width="8" height="12" viewBox="0 0 8 12"><path d="M1 0.5v9.5h5" fill="none" stroke="#c4c6c9" stroke-width="1.6"/></svg>
<svg style="left:1517px;top:142px" width="14" height="16" viewBox="0 0 14 16"><path d="M0.8 11.5c1-1 1.7-2 1.7-5a3.8 3.8 0 0 1 7.6 0c0 3 .7 4 1.7 5z" fill="#c4c6c9"/><rect x="5.2" y="13.3" width="2.2" height="1.3" fill="#c4c6c9"/><circle cx="10.6" cy="3.9" r="3" fill="#444548"/><circle cx="10.6" cy="3.9" r="2.3" fill="#3d9ddf"/></svg>
<svg style="left:1517px;top:249.5px" width="14" height="12" viewBox="0 0 14 12"><path d="M0.5 9C0.5 5 3 3 6.5 3C8 3 9 3.5 10 3C11 2.5 11.5 1.5 12.3 0.8L13.5 1.8C12.7 2.5 12.3 3.5 12.3 5C12.3 6.5 11.8 7.5 11.2 8V11H9.2V9H5.2V11H3.2V9.5C2.2 9.8 1.2 10.3 0.5 11z" fill="#c4c6c9"/><circle cx="9.5" cy="5" r=".8" fill="#444548"/></svg>
<svg style="left:1516.5px;top:637px" width="12" height="14" viewBox="0 0 12 14"><rect x="2" y="0.8" width="8.5" height="12.4" rx="1.2" fill="none" stroke="#c4c6c9" stroke-width="1.3"/></svg>
<svg style="left:1516.5px;top:762px" width="14" height="14" viewBox="0 0 14 14"><path d="M1 3v9.5h5" fill="none" stroke="#c4c6c9" stroke-width="1.3"/><rect x="7" y="1" width="5.5" height="8" rx=".8" fill="none" stroke="#c4c6c9" stroke-width="1.2"/></svg>
<svg style="left:3px;top:119px" width="13" height="13" viewBox="0 0 13 13"><path d="M6.5 0.5l3.2 5H3.3z" fill="#c4c6c9"/><rect x="0.5" y="6.5" width="5.5" height="5.5" fill="#c4c6c9"/><circle cx="9.5" cy="9.3" r="3" fill="#c4c6c9"/></svg>
<svg style="left:3px;top:199px" width="13" height="12" viewBox="0 0 13 12"><path d="M0.5 0.5h5l1.2 1.5h5.8v9.5h-12z" fill="#dfe1e4"/></svg>
<svg style="left:1.5px;top:277px" width="14" height="13" viewBox="0 0 14 13"><circle cx="6.8" cy="6.5" r="3" fill="none" stroke="#c4c6c9" stroke-width="1.6"/><path d="M0.5 6.5h3.3M9.8 6.5h3.3" stroke="#c4c6c9" stroke-width="1.6"/></svg>
<svg style="left:0px;top:387px" width="16" height="16" viewBox="0 0 16 16"><rect x="4" y="2" width="2" height="12" fill="#c4c6c9"/><path d="M7 6.5L10 3.5V9.5z" fill="#c4c6c9"/><path d="M9.5 6.5H13V12" fill="none" stroke="#c4c6c9" stroke-width="1.8"/></svg>
<svg style="left:3px;top:653px" width="12" height="13" viewBox="0 0 12 13"><path d="M1 1h9.2v11l-4.6-3.5L1 12z" fill="#c4c6c9"/></svg>
<svg style="left:3px;top:767px" width="12" height="12" viewBox="0 0 12 12"><path d="M0 10.5c.8-3.5 2.5-5.2 6-5.2s5.2 1.7 6 5.2z" fill="#c4c6c9"/><path d="M2.8 5.8l-1.3-2.8M9.2 5.8l1.3-2.8" stroke="#c4c6c9" stroke-width="1.3"/></svg>
<div class="a" style="left:0px;top:0px;width:32px;height:8px;background:#000"></div>
<div class="a" style="left:0px;top:8px;width:16px;height:8px;background:#000"></div>
<div class="a" style="left:0px;top:16px;width:8px;height:16px;background:#000"></div>
<div class="a" style="left:0px;top:832px;width:8px;height:32px;background:#000"></div>
<div class="a" style="left:0px;top:848px;width:16px;height:16px;background:#000"></div>
<div class="a" style="left:0px;top:856px;width:32px;height:8px;background:#000"></div>
<div class="a" style="left:1504px;top:0px;width:28px;height:8px;background:#000"></div>
<div class="a" style="left:1512px;top:8px;width:20px;height:8px;background:#000"></div>
<div class="a" style="left:1520px;top:16px;width:12px;height:8px;background:#000"></div>
<div class="a" style="left:1528px;top:24px;width:4px;height:16px;background:#000"></div>
<div class="a" style="left:1528px;top:824px;width:4px;height:40px;background:#000"></div>
<div class="a" style="left:1520px;top:840px;width:12px;height:24px;background:#000"></div>
<div class="a" style="left:1512px;top:848px;width:20px;height:16px;background:#000"></div>
<div class="a" style="left:1504px;top:856px;width:28px;height:8px;background:#000"></div>
</body></html>
